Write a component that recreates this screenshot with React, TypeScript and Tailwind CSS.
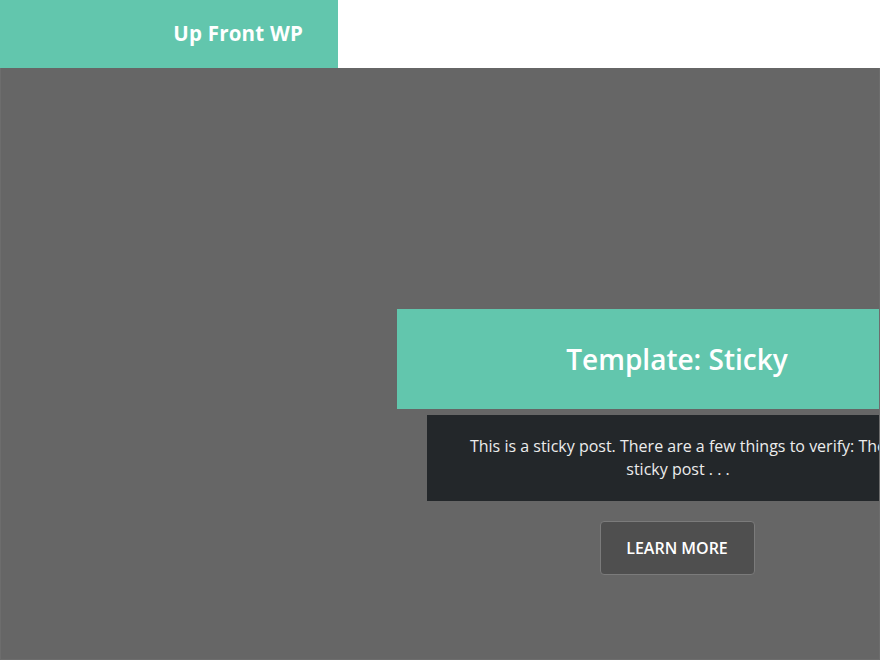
import React from "react";

const App: React.FC = () => {
  return (
    <div
      className="w-[880px] h-[660px] overflow-hidden flex flex-col bg-white"
      style={{ fontFamily: '"Open Sans", "Liberation Sans", sans-serif' }}
    >
      <header className="h-[68px] flex shrink-0">
        <div className="w-[338px] bg-[#62c6ad] flex items-center justify-end pr-[35px] pb-[2px]">
          <span className="text-white font-bold text-[20.5px] tracking-[0.2px]">Up Front WP</span>
        </div>
      </header>

      <main className="flex-1 bg-[#666666] border border-t-0 border-[#6d6d6d] overflow-hidden">
        <div className="ml-[396px] mt-[241px] w-[560px] flex flex-col shrink-0">
          <div className="h-[100px] bg-[#62c6ad] flex items-center justify-center">
            <h1 className="text-white font-semibold text-[28px] leading-none pb-[1px]">Template: Sticky</h1>
          </div>
          <div className="mt-[6px] ml-[30px] w-[502px] h-[86px] bg-[#23272a] px-[38px] pt-[20px]">
            <p className="text-[#ececec] text-[16px] leading-[23px] text-center">
              This is a sticky post. There are a few things to verify: The sticky post . . .
            </p>
          </div>
          <div className="flex justify-center mt-[20px]">
            <button className="w-[155px] h-[54px] bg-[#4f4f4f] border border-[#7b7b7b] rounded-[4px] text-white font-semibold text-[16px] uppercase">
              Learn More
            </button>
          </div>
        </div>
      </main>
    </div>
  );
};

export default App;
